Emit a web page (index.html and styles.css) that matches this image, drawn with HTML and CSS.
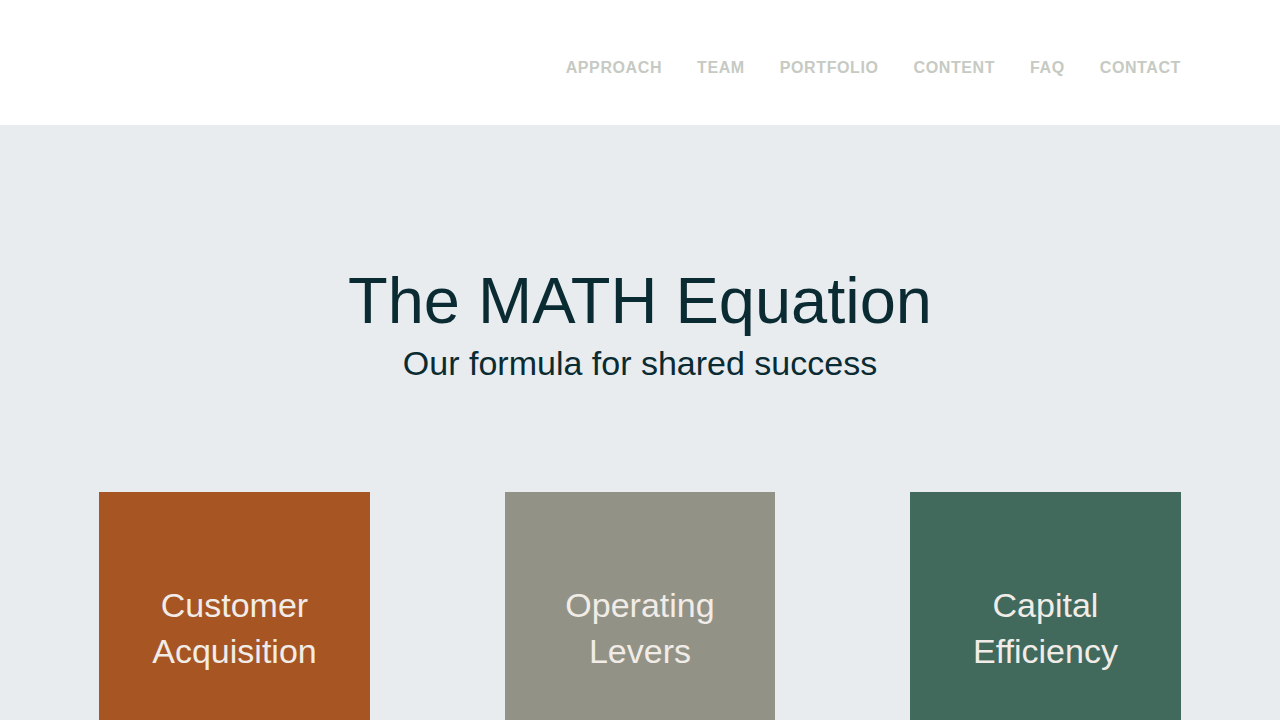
FILE: index.html
```html
<!DOCTYPE html>
<html lang="en">
<head>
<meta charset="utf-8">
<title>The MATH Equation</title>
<link rel="stylesheet" href="styles.css">
</head>
<body>
<header class="site-header">
  <nav class="nav">
    <a href="#" class="nav-link">Approach</a>
    <a href="#" class="nav-link">Team</a>
    <a href="#" class="nav-link">Portfolio</a>
    <a href="#" class="nav-link">Content</a>
    <a href="#" class="nav-link">FAQ</a>
    <a href="#" class="nav-link">Contact</a>
  </nav>
</header>
<main class="hero">
  <h1 class="title">The MATH Equation</h1>
  <p class="subtitle">Our formula for shared success</p>
  <div class="cards">
    <div class="card card-orange"><span>Customer<br>Acquisition</span></div>
    <div class="card card-grey"><span>Operating<br>Levers</span></div>
    <div class="card card-green"><span>Capital<br>Efficiency</span></div>
  </div>
</main>
</body>
</html>
```
FILE: styles.css
```css
* { box-sizing: border-box; }
html, body { margin: 0; padding: 0; }
body {
  font-family: "Liberation Sans", Arial, sans-serif;
  background: #e8ecef;
  overflow: hidden;
}
.site-header {
  background: #ffffff;
  height: 125px;
  padding: 58px 99px 0 99px;
}
.nav {
  display: flex;
  justify-content: flex-end;
  gap: 35px;
}
.nav-link {
  font-size: 16px;
  line-height: 20px;
  font-weight: 700;
  letter-spacing: 0.6px;
  text-transform: uppercase;
  color: #c6cac3;
  text-decoration: none;
}
.hero {
  padding: 140px 99px 0 99px;
  text-align: center;
  color: #0b2b33;
}
.title {
  margin: 0;
  font-size: 65px;
  line-height: 1.1;
  font-weight: 400;
}
.subtitle {
  margin: 6px 0 0 0;
  font-size: 34px;
  line-height: 40.8px;
}
.cards {
  margin-top: 109px;
  display: flex;
  justify-content: space-between;
}
.card {
  width: 271px;
  height: 271px;
  display: flex;
  align-items: center;
  justify-content: center;
  font-size: 34px;
  line-height: 46px;
  color: #f1ece7;
}
.card-orange { background: #a65523; }
.card-grey { background: #929386; width: 270px; }
.card-green { background: #426a5c; }
```
